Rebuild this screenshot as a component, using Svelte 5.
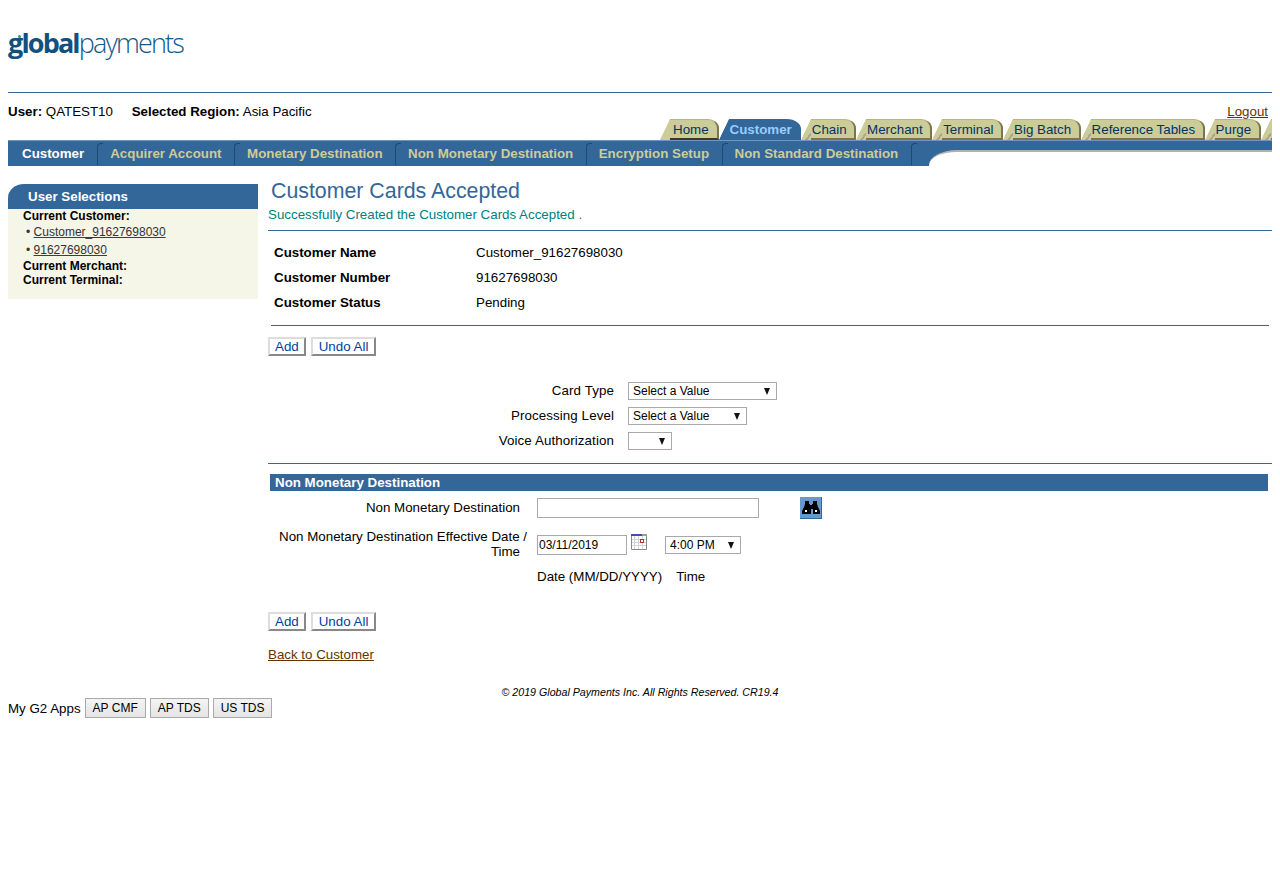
<script>
  const topTabs = ['Home', 'Customer', 'Chain', 'Merchant', 'Terminal', 'Big Batch', 'Reference Tables', 'Purge', ''];
  const subTabs = ['Customer', 'Acquirer Account', 'Monetary Destination', 'Non Monetary Destination', 'Encryption Setup', 'Non Standard Destination'];
  const summary = [
    ['Customer Name', 'Customer_91627698030'],
    ['Customer Number', '91627698030'],
    ['Customer Status', 'Pending']
  ];
</script>

<div class="page">
  <header class="brand">
    <div class="logo"><b>global</b>payments<i class="dot"></i></div>
  </header>

  <div class="userbar">
    <div class="who">
      <span class="u"><b>User:</b> QATEST10</span>
      <span><b>Selected Region:</b> Asia Pacific</span>
    </div>
    <a class="logout" href="#top">Logout</a>
  </div>

  <nav class="tabs">
    {#each topTabs as t, i}
      <a class="tab" class:on={t === 'Customer'} class:home={i === 0} href="#top">{t}</a>
    {/each}
  </nav>

  <nav class="subtabs">
    {#each subTabs as t, i}
      <a class="sub" class:on={i === 0} href="#top">{t}</a>
    {/each}
    <div class="subend"><div class="curve"></div></div>
  </nav>

  <div class="columns">
    <aside class="side">
      <h2>User Selections</h2>
      <div class="sidebody">
        <div class="k">Current Customer:</div>
        <div class="v">• <a href="#top">Customer_91627698030</a></div>
        <div class="v">• <a href="#top">91627698030</a></div>
        <div class="k">Current Merchant:</div>
        <div class="k">Current Terminal:</div>
      </div>
    </aside>

    <main class="main">
      <h1>Customer Cards Accepted</h1>
      <p class="msg">Successfully Created the Customer Cards Accepted .</p>

      <div class="summary">
        {#each summary as [k, v]}
          <div class="srow"><b>{k}</b><span>{v}</span></div>
        {/each}
      </div>

      <div class="actions top">
        <button class="btn">Add</button>
        <button class="btn undo">Undo All</button>
      </div>

      <div class="cardform">
        <label for="ct">Card Type</label>
        <span class="sel w149"><select id="ct"><option>Select a Value</option></select></span>
        <label for="pl">Processing Level</label>
        <span class="sel w119"><select id="pl"><option>Select a Value</option></select></span>
        <label for="va">Voice Authorization</label>
        <span class="sel w44"><select id="va"><option></option></select></span>
      </div>

      <div class="section">Non Monetary Destination</div>

      <div class="destform">
        <label for="nm">Non Monetary Destination</label>
        <div class="line">
          <input id="nm" class="txt wide" />
          <span class="search">
            <svg width="22" height="22" viewBox="0 0 22 22">
              <path d="M5 4h4v3h1v1h2V7h1V4h4v3l1 3 2 4v3h-7v-5h-2v5H2v-3l2-4 1-3z" fill="#000"/>
              <path d="M5 13h2v2H5zM15 13h2v2h-2z" fill="#fff"/>
            </svg>
          </span>
        </div>
        <label for="dt" class="two"><span class="l1">Non Monetary Destination Effective Date /</span><br />Time</label>
        <div class="line dates">
          <input id="dt" class="txt date" value="03/11/2019" />
          <svg class="cal" width="16" height="16" viewBox="0 0 16 16">
            <rect x="0" y="0" width="16" height="16" fill="#fff"/>
            <path d="M0 5.5h15M0 8.5h15M0 11.5h15M3.5 2v13M7.5 2v13M11.5 2v13" stroke="#d4d4d4"/>
            <rect x="0" y="0" width="11" height="2" fill="#4a4aa8"/>
            <rect x="11" y="0" width="5" height="2" fill="#999"/>
            <path d="M0.5 2v13.5h15V2" fill="none" stroke="#8a8a8a"/>
            <rect x="9.5" y="5.5" width="3" height="3" fill="#fff" stroke="#a33"/>
          </svg>
          <span class="sel w76 time"><select><option>4:00 PM</option></select></span>
        </div>
        <div></div>
        <div class="hints"><span>Date (MM/DD/YYYY)</span><span>Time</span></div>
      </div>

      <div class="actions second">
        <button class="btn">Add</button>
        <button class="btn undo">Undo All</button>
      </div>

      <a class="back" href="#top">Back to Customer</a>
    </main>
  </div>

  <footer class="copy">© 2019 Global Payments Inc. All Rights Reserved. CR19.4</footer>

  <div class="apps">
    <span>My G2 Apps</span>
    <button>AP CMF</button>
    <button>AP TDS</button>
    <button>US TDS</button>
  </div>
</div>

<style>
:global(body) {
  margin: 0;
  background: #fff;
  overflow: hidden;
}
.page {
  padding: 0 8px;
  font-family: "Liberation Sans", Arial, sans-serif;
  font-size: 13.33px;
  color: #000;
}
.brand {
  height: 92px;
  border-bottom: 1px solid #336699;
}
.logo {
  position: relative;
  display: inline-block;
  margin-top: 25px;
  font-family: "Open Sans", sans-serif;
  font-size: 27px;
  font-weight: 300;
  line-height: 36px;
  letter-spacing: -1.85px;
  color: #0f5a8a;
}
.logo b {
  font-weight: 700;
  color: #11507f;
}
.dot {
  position: absolute;
  left: 10px;
  top: 10px;
  width: 3px;
  height: 3px;
  border-radius: 50%;
  background: #2e9b5e;
}
.userbar {
  display: flex;
  justify-content: space-between;
  height: 26px;
  padding-top: 11px;
  line-height: 16px;
}
.who .u {
  margin-right: 15px;
}
.logout {
  margin-right: 4px;
  color: #663300;
}
.tabs {
  display: flex;
  height: 21px;
  margin-top: -11px;
  overflow: hidden;
  padding-left: 652px;
}
.tab {
  position: relative;
  flex: none;
  box-sizing: border-box;
  height: 21px;
  margin-left: 10px;
  padding: 1px 7.5px 0 1px;
  background: #cccc99;
  border-top: 1px solid #b5b585;
  border-right: 2px solid #77774a;
  border-bottom: 2px solid #77774a;
  border-top-right-radius: 11px 9px;
  color: #003366;
  text-decoration: none;
  line-height: 18px;
  white-space: nowrap;
}
.tab::before {
  content: "";
  position: absolute;
  left: -10px;
  top: -1px;
  bottom: -2px;
  width: 10px;
  background:
    linear-gradient(to bottom right, transparent 49%, #a8a88e 50%, #a8a88e 70%, transparent 71%) bottom right / 6px 8px no-repeat,
    linear-gradient(to bottom right, transparent 48%, #cccc99 52%);
}
.tab.home {
  padding: 1px 8px 0 3px;
  border-bottom-color: #3a3a20;
}
.tab.home::before {
  background: linear-gradient(to bottom right, transparent 48%, #cccc99 52%);
}
.tab.on {
  padding: 2px 9px 0 1px;
  background: #336699;
  border: 0;
  border-top-right-radius: 14px 10px;
  color: #99ccff;
  font-weight: 700;
}
.tab.on::before {
  top: 0;
  bottom: 0;
  background: linear-gradient(to bottom right, transparent 48%, #336699 52%);
}
.tab:last-child {
  width: 10px;
  padding: 0;
}
.subtabs {
  display: flex;
  box-sizing: border-box;
  height: 26px;
  border-top: 1px solid #6f97bd;
  background: #336699;
}
.sub {
  position: relative;
  padding: 0 12.5px 0 13px;
  line-height: 25px;
  font-weight: 700;
  color: #cccc99;
  text-decoration: none;
  white-space: nowrap;
}
.sub::before {
  content: "";
  position: absolute;
  left: 0;
  top: 2px;
  bottom: 1px;
  width: 5px;
  border-left: 1px solid #1c4a73;
  border-top: 1px solid #1c4a73;
  border-top-left-radius: 4px;
}
.sub.on {
  padding: 0 13px 0 14px;
  color: #fff;
}
.sub.on::before {
  display: none;
}
.subend {
  position: relative;
  flex: 1;
  overflow: hidden;
}
.subend::before {
  content: "";
  position: absolute;
  left: 0;
  top: 2px;
  bottom: 1px;
  width: 5px;
  border-left: 1px solid #1c4a73;
  border-top: 1px solid #1c4a73;
  border-top-left-radius: 4px;
}
.curve {
  position: absolute;
  left: 18px;
  top: 9px;
  right: -40px;
  height: 40px;
  background: #fff;
  border-top: 2px solid #b0b0b0;
  border-top-left-radius: 28px 15px;
}
.columns {
  display: flex;
  gap: 10px;
  margin-top: 18px;
}
.side {
  flex: none;
  width: 250px;
  align-self: flex-start;
}
.side h2 {
  margin: 0;
  height: 25px;
  padding-left: 20px;
  background: #336699;
  border-top-left-radius: 16px 14px;
  color: #fff;
  font-size: 13.33px;
  line-height: 25px;
}
.sidebody {
  height: 90px;
  padding-left: 15px;
  background: #f5f5e8;
  font-size: 12px;
}
.k {
  font-weight: 700;
  line-height: 14px;
}
.v {
  padding-left: 3px;
  line-height: 18px;
  color: #333;
}
.v a {
  color: #333;
  text-decoration-color: #663300;
}
.main {
  flex: 1;
  min-width: 0;
}
h1 {
  margin: -6px 0 0 3px;
  font-size: 21.33px;
  font-weight: 400;
  line-height: 26px;
  color: #336699;
}
.msg {
  margin: 0;
  height: 26px;
  line-height: 22px;
  color: #008080;
  border-bottom: 1px solid #336699;
}
.summary {
  margin: 9px 3px 0 3px;
  padding: 0 0 10px 3px;
  border-bottom: 1px solid #336699;
}
.srow {
  display: flex;
  height: 25px;
  line-height: 25px;
}
.srow b {
  width: 202px;
}
.actions {
  display: flex;
  gap: 5px;
}
.top {
  margin-top: 11px;
}
.btn {
  box-sizing: border-box;
  height: 19px;
  padding: 0 5px;
  background: #fff;
  border: 2px solid;
  border-color: #ddd #888 #888 #ddd;
  border-radius: 0;
  font: 13.33px "Liberation Sans", Arial, sans-serif;
  color: #003f9f;
  line-height: 15px;
}
.undo {
  padding: 0 6px;
}
.cardform {
  display: grid;
  grid-template-columns: 346px auto;
  justify-content: start;
  column-gap: 14px;
  grid-auto-rows: 25px;
  align-items: center;
  margin-top: 22px;
  padding-bottom: 10px;
  border-bottom: 1px solid #336699;
}
.cardform label {
  text-align: right;
  letter-spacing: 0.1px;
}
.sel {
  position: relative;
  display: block;
  height: 18px;
}
.sel select {
  appearance: none;
  display: block;
  box-sizing: border-box;
  width: 100%;
  height: 100%;
  padding: 0 0 0 4px;
  border: 1px solid #a9a9a9;
  border-radius: 0;
  background: #fff;
  font: 12px "Liberation Sans", Arial, sans-serif;
  color: #000;
}
.sel::after {
  content: "";
  position: absolute;
  right: 7px;
  top: 6px;
  border-left: 3.5px solid transparent;
  border-right: 3.5px solid transparent;
  border-top: 7px solid #111;
  pointer-events: none;
}
.w149 { width: 149px; }
.w119 { width: 119px; }
.w44 { width: 44px; }
.w76 { width: 76px; }
.section {
  margin: 10px 4px 0 2px;
  height: 17px;
  padding-left: 5px;
  background: #336699;
  color: #fff;
  font-weight: 700;
  line-height: 17px;
}
.destform {
  display: grid;
  grid-template-columns: 252px 1fr;
  column-gap: 17px;
  margin-top: 7px;
}
.destform label {
  text-align: right;
  line-height: 15px;
  padding-top: 2px;
}
.l1 {
  margin-right: -7px;
  white-space: nowrap;
}
.line {
  display: flex;
  align-items: flex-start;
}
.txt {
  box-sizing: border-box;
  height: 20px;
  padding: 0 1px;
  border: 1px solid #a9a9a9;
  border-radius: 0;
  font: 12px "Liberation Sans", Arial, sans-serif;
}
.wide {
  width: 222px;
}
.search {
  width: 22px;
  height: 22px;
  margin: -1px 0 0 41px;
  background: #6699cc;
  box-shadow: inset -1px -1px 0 #336699;
}
.search svg {
  display: block;
}
.dates {
  margin-top: 7px;
}
.two {
  margin-top: 8px;
}
.date {
  width: 90px;
  margin-top: 9px;
}
.cal {
  margin: 8px 0 0 4px;
}
.time {
  margin: 10px 0 0 18px;
}
.hints {
  display: flex;
  gap: 14px;
  margin-top: 10px;
  line-height: 16px;
}
.second {
  margin-top: 27px;
}
.back {
  display: inline-block;
  margin-top: 16px;
  color: #663300;
  line-height: 16px;
}
.copy {
  margin-top: 24px;
  text-align: center;
  font-size: 10.67px;
  font-style: italic;
  line-height: 11px;
}
.apps {
  display: flex;
  align-items: center;
  gap: 4px;
}
.apps button {
  height: 20px;
  padding: 0 7px;
  background: linear-gradient(#f4f4f4, #e4e4e4);
  border: 1px solid #aaa;
  border-radius: 0;
  font: 12px "Liberation Sans", Arial, sans-serif;
  color: #000;
}
</style>
